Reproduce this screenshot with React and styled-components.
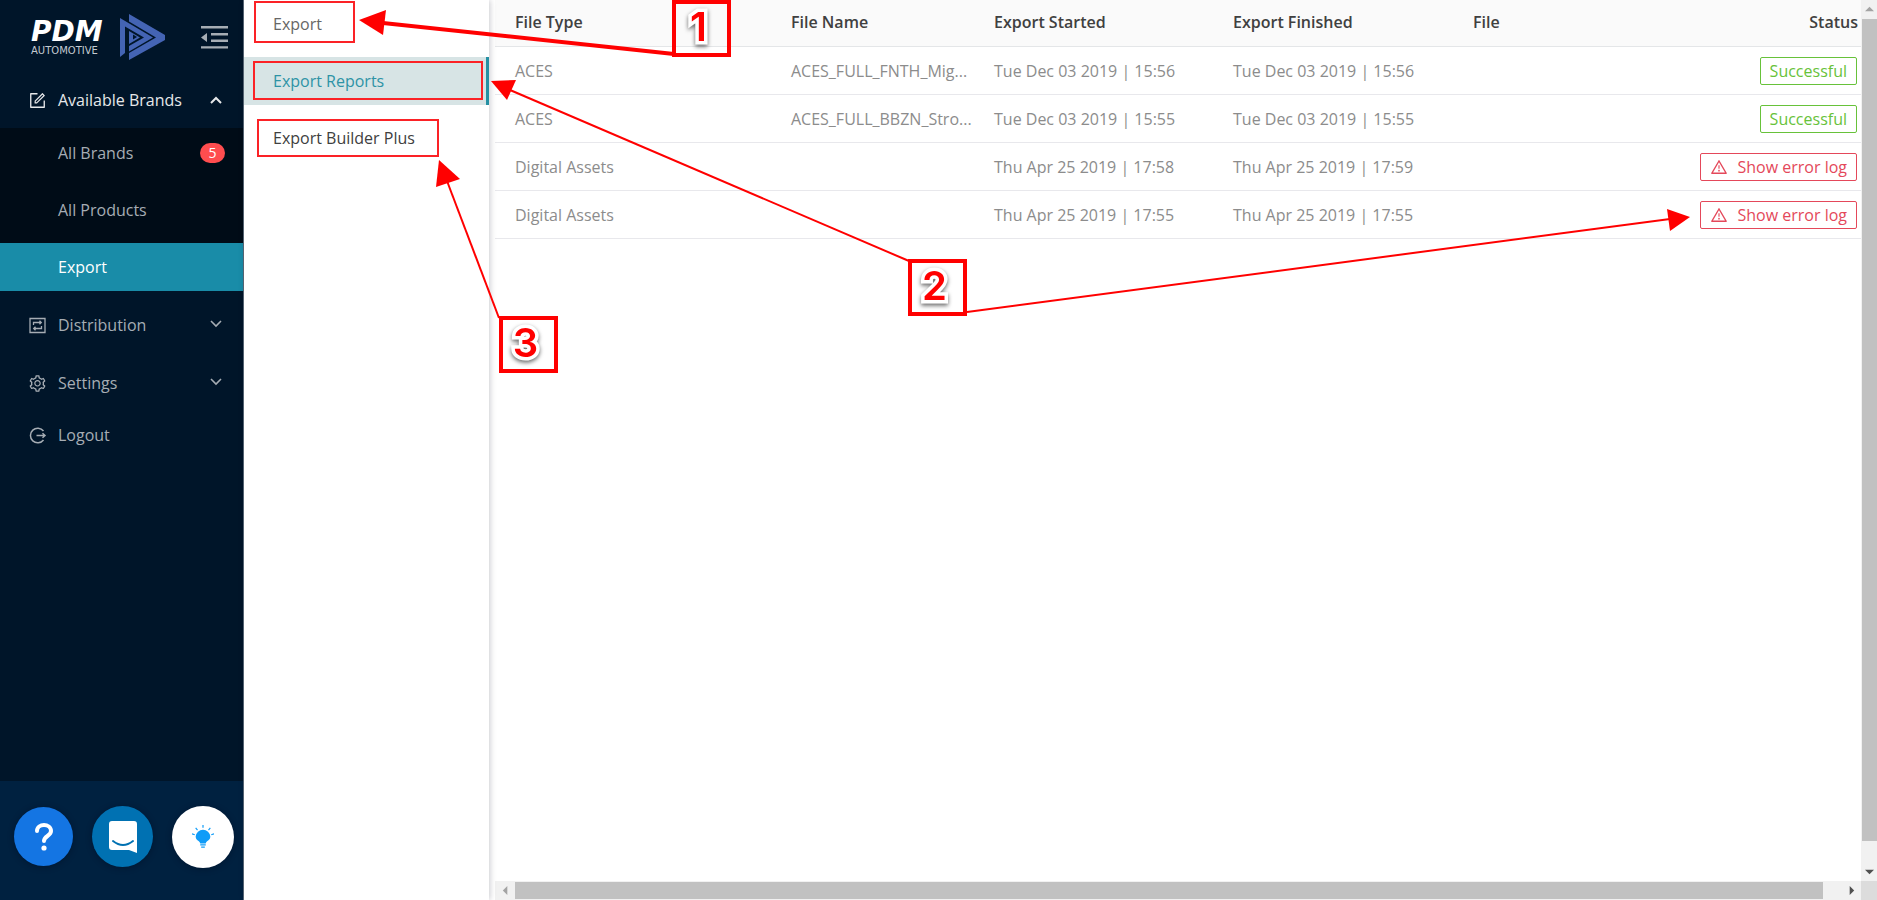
import React from "react";
import styled, { createGlobalStyle, css } from "styled-components";
import { AiOutlineForm, AiOutlineSetting, AiOutlineWarning } from "react-icons/ai";

const GlobalStyle = createGlobalStyle`
  *, *::before, *::after { box-sizing: border-box; }
  body {
    margin: 0;
    font-family: "Open Sans", "Noto Sans", sans-serif;
    font-size: 16px;
    line-height: 24px;
    color: #595959;
    background: #fff;
  }
  button { font: inherit; color: inherit; background: none; border: 0; padding: 0; cursor: pointer; }
  a { color: inherit; text-decoration: none; }
  ul { list-style: none; margin: 0; padding: 0; }
`;

const Page = styled.div`
  position: relative;
  display: flex;
  height: 100vh;
  overflow: hidden;
`;

/* ---------- dark sidebar ---------- */

const Sidebar = styled.aside`
  display: flex;
  flex-direction: column;
  flex: none;
  width: 244px;
  background: #001529;
  border-right: 1px solid #5c6b78;
`;

const Brand = styled.header`
  display: flex;
  align-items: center;
  height: 76px;
  padding: 0 14px 2px 31px;
`;

const Wordmark = styled.div`
  display: flex;
  flex-direction: column;
  width: 80px;
  color: #fff;
  font-family: "DejaVu Sans", sans-serif;
`;

const WordmarkName = styled.span`
  font-size: 28px;
  line-height: 28px;
  font-weight: 700;
  font-style: italic;
`;

const WordmarkTag = styled.span`
  font-size: 10px;
  line-height: 10px;
  color: #c3cad1;
`;

const LogoMark = styled.svg`
  width: 45px;
  height: 46px;
  margin-left: 9px;
`;

const FoldButton = styled.button`
  display: flex;
  margin-left: auto;
  color: #a6adb4;
`;

const Nav = styled.nav`
  flex: 1;
`;

const rowBase = css`
  display: flex;
  align-items: center;
  width: 100%;
  height: 48px;
  text-align: left;
`;

const NavRow = styled.button`
  ${rowBase}
  gap: 11px;
  padding: 0 19px 0 28px;
  color: ${(p) => (p.$open ? "#e6e8ea" : "#a6adb4")};
  margin-bottom: ${(p) => p.$gap || 0}px;
`;

const NavIcon = styled.span`
  display: flex;
  svg { width: 19px; height: 19px; }
`;

const Chevron = styled.svg`
  width: 16px;
  height: 16px;
  margin-left: auto;
  fill: none;
  stroke: currentColor;
  stroke-width: ${(p) => (p.$bold ? 2 : 1.6)};
`;

const SubMenu = styled.ul`
  display: flex;
  flex-direction: column;
  gap: 9px;
  margin: 4px 0 10px;
  padding-top: 1px;
  background: #000c17;
`;

const SubLink = styled.a`
  ${rowBase}
  justify-content: space-between;
  padding: 0 18px 0 58px;
  color: ${(p) => (p.$active ? "#fff" : "#a6adb4")};
  background: ${(p) => (p.$active ? "#198ca8" : "transparent")};
`;

const Badge = styled.span`
  width: 25px;
  height: 20px;
  border-radius: 10px;
  background: #ff4d4f;
  color: #fff;
  font-size: 14px;
  line-height: 20px;
  text-align: center;
`;

const Dock = styled.footer`
  display: flex;
  align-items: center;
  justify-content: space-between;
  height: 119px;
  padding: 0 9px 8px 14px;
  background: #002140;
`;

const RoundButton = styled.button`
  display: flex;
  align-items: center;
  justify-content: center;
  width: ${(p) => p.$size}px;
  height: ${(p) => p.$size}px;
  border-radius: 50%;
  background: ${(p) => p.$bg};
  box-shadow: 0 1px 6px rgba(0, 10, 30, 0.45);
`;

/* ---------- section menu ---------- */

const SectionMenu = styled.ul`
  position: relative;
  z-index: 1;
  display: flex;
  flex-direction: column;
  flex: none;
  gap: 9px;
  width: 245px;
  background: #fff;
  box-shadow: 1px 0 6px rgba(0, 10, 30, 0.22);
`;

const SectionLink = styled.a`
  ${rowBase}
  padding-left: 29px;
  color: ${(p) => p.$color};
  ${(p) =>
    p.$active &&
    css`
      background: #d7e4e5;
      border-right: 3px solid #2590a3;
    `}
`;

/* ---------- report table ---------- */

const Main = styled.main`
  display: grid;
  grid-template-columns: minmax(0, 1fr) 16px;
  grid-template-rows: minmax(0, 1fr) 19px;
  flex: 1;
  min-width: 0;
  padding-left: 6px;
`;

const TableArea = styled.div`
  overflow: hidden;
`;

const Table = styled.table`
  width: 100%;
  table-layout: fixed;
  border-collapse: separate;
  border-spacing: 0;
`;

const Col = styled.col`
  width: ${(p) => (p.$w ? `${p.$w}px` : "auto")};
`;

const HeadCell = styled.th`
  height: 47px;
  padding: 0 3px 3px 20px;
  border-bottom: 1px solid #e4e6e8;
  background: #fafafa;
  color: #404040;
  font-weight: 600;
  text-align: ${(p) => (p.$right ? "right" : "left")};
`;

const Cell = styled.td`
  height: 48px;
  padding: 0 4px 0 20px;
  border-bottom: 1px solid #e8e8ec;
  color: #8c8c8c;
  white-space: nowrap;
  overflow: hidden;
  text-align: ${(p) => (p.$right ? "right" : "left")};
`;

const tagStyle = css`
  display: inline-flex;
  align-items: center;
  gap: 10px;
  height: 28px;
  padding: 0 9px;
  border: 1px solid;
  border-radius: 2px;
  vertical-align: middle;
`;

const SuccessTag = styled.span`
  ${tagStyle}
  color: #67c23a;
`;

const ErrorButton = styled.button`
  && {
    ${tagStyle}
    color: #e4485a;
  }
  svg { width: 18px; height: 18px; }
`;

/* ---------- scrollbars ---------- */

const Track = styled.div`
  display: flex;
  flex-direction: ${(p) => (p.$vertical ? "column" : "row")};
  background: #f1f1f1;
`;

const Thumb = styled.div`
  flex: 1;
  margin: ${(p) => (p.$vertical ? "0 0 21px 1px" : "1px 18px 1px 0")};
  background: #c1c1c1;
`;

const TrackEnd = styled.div`
  display: flex;
  align-items: center;
  justify-content: center;
  flex: none;
  width: ${(p) => (p.$vertical ? 16 : 20)}px;
  height: 19px;
  color: ${(p) => (p.$dim ? "#a3a3a3" : "#505050")};
  svg { width: 9px; height: 9px; fill: currentColor; }
`;

const Corner = styled.div`
  background: #dcdcdc;
`;

/* ---------- annotations drawn over the page ---------- */

const Overlay = styled.div`
  position: absolute;
  inset: 0;
  z-index: 2;
  pointer-events: none;
`;

const Arrows = styled.svg`
  position: absolute;
  inset: 0;
  width: 100%;
  height: 100%;
`;

const Outline = styled.div`
  position: absolute;
  left: ${(p) => p.$x}px;
  top: ${(p) => p.$y}px;
  width: ${(p) => p.$w}px;
  height: ${(p) => p.$h}px;
  border: 2px solid #fb2226;
`;

const Callout = styled.div`
  position: absolute;
  left: ${(p) => p.$x}px;
  top: ${(p) => p.$y}px;
  display: flex;
  align-items: center;
  justify-content: center;
  width: 59px;
  height: 57px;
  padding: 0 6px 4px 0;
  border: 4px solid #f00;
`;

const Digit = styled.span`
  color: #f00;
  font-family: Inter, sans-serif;
  font-size: 40px;
  font-weight: 600;
  line-height: 48px;
  -webkit-text-stroke: 7px #fff;
  paint-order: stroke fill;
  filter: drop-shadow(0 2px 2px rgba(0, 0, 0, 0.6));
`;

const Icon = ({ d, w = 1.5 }) => (
  <svg viewBox="-1 -1 19 19" fill="none" stroke="currentColor" strokeWidth={w}>
    <path d={d} />
  </svg>
);

const Arrow = ({ line, head, width = 2 }) => (
  <g>
    <path d={line} stroke="#f00" strokeWidth={width} />
    <polygon points={head} fill="#f00" />
  </g>
);

const Down = () => (
  <Chevron viewBox="0 0 16 16">
    <path d="M3 4l5 5 5-5" />
  </Chevron>
);

const reports = [
  ["ACES", "ACES_FULL_FNTH_Mig...", "Tue Dec 03 2019 | 15:56", "Tue Dec 03 2019 | 15:56", true],
  ["ACES", "ACES_FULL_BBZN_Stro...", "Tue Dec 03 2019 | 15:55", "Tue Dec 03 2019 | 15:55", true],
  ["Digital Assets", "", "Thu Apr 25 2019 | 17:58", "Thu Apr 25 2019 | 17:59", false],
  ["Digital Assets", "", "Thu Apr 25 2019 | 17:55", "Thu Apr 25 2019 | 17:55", false],
];

export default function App() {
  return (
    <>
      <GlobalStyle />
      <Page>
        <Sidebar>
          <Brand>
            <Wordmark>
              <WordmarkName>PDM</WordmarkName>
              <WordmarkTag>AUTOMOTIVE</WordmarkTag>
            </Wordmark>
            <LogoMark viewBox="0 0 45 46" fill="#4464b4" aria-hidden="true">
              <path d="M9 0L45 21V26L9 46V39L36 23.500L9 7.500Z" />
              <path d="M0 4L33 23.500L9 37.500V32L24 23.500L5 12.500V39L0 43Z" />
              <path d="M9 17L20 23.500L9 30Z" />
              <path d="M13 20.500L17 23L13 25.500Z" fill="#001529" />
            </LogoMark>
            <FoldButton aria-label="Collapse menu">
              <svg width="28" height="24" viewBox="0 0 28 24" fill="currentColor">
                <path d="M0 1H27V3.400H0ZM10 8H27V10.400H10ZM10 14.500H27V16.900H10ZM0 21.200H27V23.600H0ZM6 8V17L0 12.500Z" />
              </svg>
            </FoldButton>
          </Brand>
          <Nav>
            <NavRow $open>
              <NavIcon><AiOutlineForm /></NavIcon>
              Available Brands
              <Chevron $bold viewBox="0 0 16 16"><path d="M3 11l5-5 5 5" /></Chevron>
            </NavRow>
            <SubMenu>
              <li><SubLink href="#brands">All Brands<Badge>5</Badge></SubLink></li>
              <li><SubLink href="#products">All Products</SubLink></li>
              <li><SubLink href="#export" $active>Export</SubLink></li>
            </SubMenu>
            <NavRow $gap={10}>
              <NavIcon><Icon w={1.3} d="M1 1.5H16V15.5H1ZM4.5 8V5.5H12M10.5 3.7L12.3 5.5L10.5 7.3M12.5 9V11.5H5M6.5 9.7L4.7 11.5L6.5 13.3" /></NavIcon>
              Distribution
              <Down />
            </NavRow>
            <NavRow $gap={4}>
              <NavIcon><AiOutlineSetting /></NavIcon>
              Settings
              <Down />
            </NavRow>
            <NavRow>
              <NavIcon><Icon d="M14.5 4A7.3 7.3 0 1 0 14.5 13M7.5 8.5H15.5M13.5 6.2L16 8.5L13.5 10.8" /></NavIcon>
              Logout
            </NavRow>
          </Nav>
          <Dock>
            <RoundButton $size={59} $bg="#1475e3" aria-label="Help">
              <svg width="20" height="28" viewBox="0 0 20 28" fill="none" stroke="#fff" strokeWidth="4">
                <path d="M3 8C3 0 17 0 17 8C17 13 10 13 10 18" strokeLinecap="round" />
                <circle cx="10" cy="25" r="2.6" fill="#fff" stroke="none" />
              </svg>
            </RoundButton>
            <RoundButton $size={61} $bg="#0071b2" aria-label="Chat">
              <svg width="30" height="32" viewBox="0 0 30 32">
                <path d="M4 0H26Q29 0 29 3V32L21 29H4Q1 29 1 26V3Q1 0 4 0Z" fill="#fff" />
                <path d="M5 20Q15 28 25 20" fill="none" stroke="#0071b2" strokeWidth="2" strokeLinecap="round" />
              </svg>
            </RoundButton>
            <RoundButton $size={62} $bg="#fff" aria-label="Tips">
              <svg width="22" height="24" viewBox="0 0 24 26" fill="#109cf8">
                <path d="M12 5A8 8 0 0 1 20 12.500C20 17 15.500 17 15 20H9C8.500 17 4 17 4 12.500A8 8 0 0 1 12 5Z" />
                <path d="M9 21.500H15M10 24H14M12 0V3M4 3L6 5.500M20 3L18 5.500M0 9.500L3 10.500M24 9.500L21 10.500" stroke="#109cf8" strokeWidth="1.3" />
              </svg>
            </RoundButton>
          </Dock>
        </Sidebar>

        <SectionMenu>
          <li><SectionLink href="#export" $color="#666">Export</SectionLink></li>
          <li><SectionLink href="#reports" $color="#2e93a5" $active>Export Reports</SectionLink></li>
          <li><SectionLink href="#builder" $color="#404040">Export Builder Plus</SectionLink></li>
        </SectionMenu>

        <Main>
          <TableArea>
            <Table>
              <colgroup>
                <Col $w={276} />
                <Col $w={203} />
                <Col $w={239} />
                <Col $w={240} />
                <Col />
                <Col $w={200} />
              </colgroup>
              <thead>
                <tr>
                  <HeadCell>File Type</HeadCell>
                  <HeadCell>File Name</HeadCell>
                  <HeadCell>Export Started</HeadCell>
                  <HeadCell>Export Finished</HeadCell>
                  <HeadCell>File</HeadCell>
                  <HeadCell $right>Status</HeadCell>
                </tr>
              </thead>
              <tbody>
                {reports.map(([type, name, started, finished, ok], i) => (
                  <tr key={i}>
                    <Cell>{type}</Cell>
                    <Cell>{name}</Cell>
                    <Cell>{started}</Cell>
                    <Cell>{finished}</Cell>
                    <Cell />
                    <Cell $right>
                      {ok ? (
                        <SuccessTag>Successful</SuccessTag>
                      ) : (
                        <ErrorButton><AiOutlineWarning />Show error log</ErrorButton>
                      )}
                    </Cell>
                  </tr>
                ))}
              </tbody>
            </Table>
          </TableArea>
          <Track $vertical aria-hidden="true">
            <TrackEnd $vertical $dim><svg viewBox="0 0 10 10"><path d="M0 7L5 2L10 7Z" /></svg></TrackEnd>
            <Thumb $vertical />
            <TrackEnd $vertical><svg viewBox="0 0 10 10"><path d="M0 3L5 8L10 3Z" /></svg></TrackEnd>
          </Track>
          <Track aria-hidden="true">
            <TrackEnd $dim><svg viewBox="0 0 10 10"><path d="M7 0L2 5L7 10Z" /></svg></TrackEnd>
            <Thumb />
            <TrackEnd><svg viewBox="0 0 10 10"><path d="M3 0L8 5L3 10Z" /></svg></TrackEnd>
          </Track>
          <Corner />
        </Main>

        <Overlay>
          <Arrows aria-hidden="true">
            <Arrow width={4} line="M674 54L383 23" head="359,20 386,10 383,35" />
            <Arrow line="M909 261L510 90" head="491,81 516,80 507,100" />
            <Arrow line="M967 312L1670 219" head="1690,217 1667,209 1670,231" />
            <Arrow line="M499 318L447 181" head="439,160 460,179 436,187" />
          </Arrows>
          <Outline $x={254} $y={1} $w={101} $h={42} />
          <Outline $x={253} $y={61} $w={230} $h={39} />
          <Outline $x={257} $y={119} $w={182} $h={38} />
          <Callout $x={672} $y={0}><Digit>1</Digit></Callout>
          <Callout $x={908} $y={259}><Digit>2</Digit></Callout>
          <Callout $x={499} $y={316}><Digit>3</Digit></Callout>
        </Overlay>
      </Page>
    </>
  );
}
